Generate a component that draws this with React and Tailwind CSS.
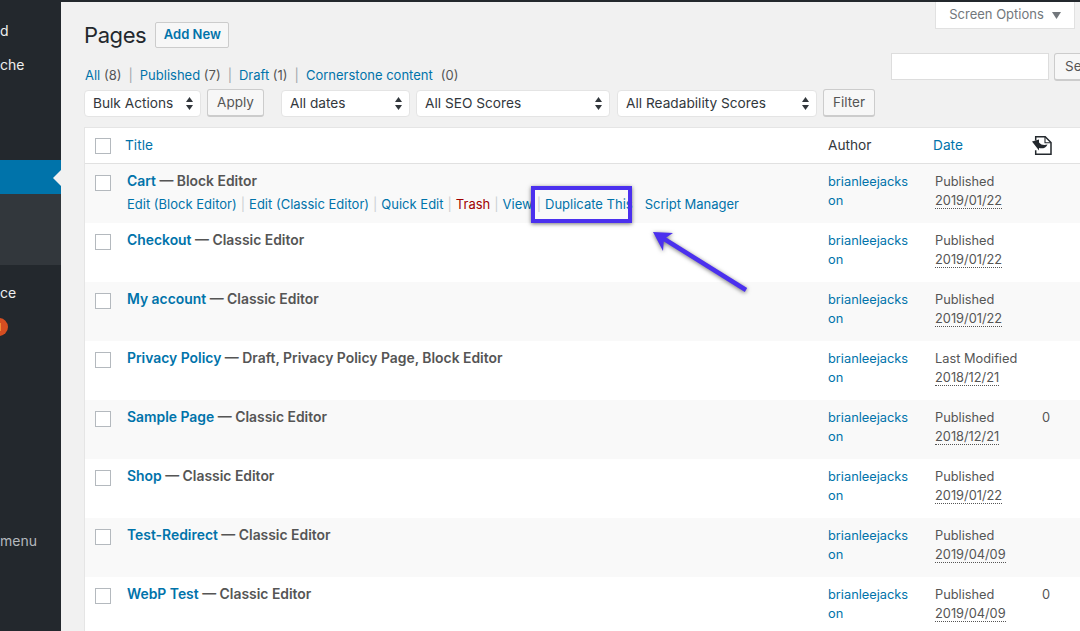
import React from "react";

const rows = [
  { title: "Cart", state: "Block Editor", status: "Published", date: "2019/01/22", actions: true },
  { title: "Checkout", state: "Classic Editor", status: "Published", date: "2019/01/22" },
  { title: "My account", state: "Classic Editor", status: "Published", date: "2019/01/22" },
  { title: "Privacy Policy", state: "Draft, Privacy Policy Page, Block Editor", status: "Last Modified", date: "2018/12/21" },
  { title: "Sample Page", state: "Classic Editor", status: "Published", date: "2018/12/21", comments: "0" },
  { title: "Shop", state: "Classic Editor", status: "Published", date: "2019/01/22" },
  { title: "Test-Redirect", state: "Classic Editor", status: "Published", date: "2019/04/09" },
  { title: "WebP Test", state: "Classic Editor", status: "Published", date: "2019/04/09", comments: "0" },
];

const selects = [
  { label: "Bulk Actions", width: "w-[117px]" },
  { label: "All dates", width: "w-[129px]" },
  { label: "All SEO Scores", width: "w-[194px]" },
  { label: "All Readability Scores", width: "w-[200px]" },
];

const Checkbox = () => (
  <span className="block w-4 h-4 bg-white border border-[#b4b9be]"></span>
);

const Select = ({ label, width }) => (
  <div className={`${width} h-[27px] bg-white rounded-[4px] border border-[#e4e4e4] flex items-center justify-between pl-2 pr-[7px] text-[13.7px] text-[#32373c]`}>
    <span>{label}</span>
    <svg width="7" height="13" viewBox="0 0 7 13" fill="#32373c">
      <path d="M3.5 0 7 5H0z" />
      <path d="M3.5 13 0 8h7z" />
    </svg>
  </div>
);

const Button = ({ children, className }) => (
  <button className={`h-[28px] bg-[#f7f7f7] border border-[#cccccc] border-b-2 rounded-[3px] text-[13.5px] text-[#555555] ${className}`}>
    {children}
  </button>
);

const Sep = () => <span className="text-[#a0a5aa] px-[7px]">|</span>;

const ActionSep = () => <span className="text-[#ccd0d4] px-[4px]">|</span>;

const App = () => {
  return (
    <div className="w-[1080px] h-[631px] overflow-hidden flex flex-col bg-[#f1f1f1] font-['Inter','Liberation_Sans',sans-serif]">
      <div className="h-[2px] bg-[#23282d] shrink-0"></div>

      <div className="flex-1 flex min-h-0">
        {/* SIDEBAR */}
        <div className="relative w-[61px] shrink-0 bg-[#23282d] text-[14px] text-[#eeeeee] flex flex-col">
          <div className="h-[158px] pt-[19px]">
            <div className="h-5 leading-5">d</div>
            <div className="h-5 leading-5 mt-[14px]">che</div>
          </div>
          <div className="h-[34px] bg-[#0073aa]"></div>
          <div className="h-[71px] bg-[#32373c]"></div>
          <div className="h-5 leading-5 mt-[18px]">ce</div>
          <div className="mt-[15px] -ml-[10px] w-[18px] h-[18px] rounded-full bg-[#d54e21] flex items-center justify-center text-[11px] text-white">1</div>
          <div className="h-5 leading-5 mt-[195px] text-[#b4b9be]">menu</div>
          <span className="absolute right-0 top-[168px] w-0 h-0 border-y-[8px] border-y-transparent border-r-[8px] border-r-[#f1f1f1]"></span>
        </div>

        {/* CONTENT */}
        <div className="relative flex-1 min-w-0 pl-[23px]">
          <div className="flex">
            <div className="w-[791px] shrink-0">
              <div className="flex items-center gap-[9px] pt-[20px]">
                <h1 className="text-[22px] tracking-[-0.4px] leading-[26px] text-[#23282d]">Pages</h1>
                <button className="h-[26px] w-[74px] bg-[#f7f7f7] border border-[#cccccc] rounded-[2px] text-[13px] font-semibold text-[#0073aa]">
                  Add New
                </button>
              </div>
              <div className="mt-[17px] h-5 leading-5 text-[13px] text-[#555555] whitespace-nowrap">
                <span className="text-[#0073aa] pl-px">All</span> (8)
                <Sep />
                <span className="text-[#0073aa]">Published</span> (7)
                <Sep />
                <span className="text-[#0073aa]">Draft</span> (1)
                <Sep />
                <span className="text-[#0073aa]">Cornerstone content</span>
                <span className="pl-[8px]">(0)</span>
              </div>
              <div className="flex items-center mt-[4px]">
                <Select {...selects[0]} />
                <Button className="w-[57px] ml-[6px]">Apply</Button>
                <div className="ml-[17px]"><Select {...selects[1]} /></div>
                <div className="ml-[6px]"><Select {...selects[2]} /></div>
                <div className="ml-[7px]"><Select {...selects[3]} /></div>
                <Button className="w-[52px] ml-[6px]">Filter</Button>
              </div>
            </div>

            <div className="ml-[16px] w-[230px] shrink-0">
              <div className="ml-[44px] w-[140px] h-[27px] bg-white border border-[#e1e1e1] border-t-0 flex items-center justify-center gap-[8px] text-[13px] text-[#72777c]">
                Screen Options
                <svg width="9" height="7" viewBox="0 0 9 7" fill="#72777c"><path d="M0 0h9L4.5 7z" /></svg>
              </div>
              <div className="flex mt-[24px] gap-[5px]">
                <div className="w-[158px] h-[27px] bg-white border border-[#dddddd]"></div>
                <Button className="w-[60px] shrink-0 text-left pl-[10px]">Search</Button>
              </div>
            </div>
          </div>

          {/* TABLE */}
          <div className="mt-[10px] w-[1030px] bg-white border-t border-l border-[#e5e5e5]">
            <div className="grid grid-cols-[40px_703px_105px_99px_1fr] items-center h-[36px] border-b border-[#e1e1e1] text-[13.7px]">
              <div className="pl-[10px]"><Checkbox /></div>
              <div className="text-[#0073aa]">Title</div>
              <div className="text-[#32373c]">Author</div>
              <div className="text-[#0073aa]">Date</div>
              <svg width="20" height="19" viewBox="0 0 20 19" fill="none">
                <path d="M3.7 4.5V.8h9.5l5.8 5.7v11.7H3.7v-4" stroke="#23282d" strokeWidth="1.5" />
                <path d="M13 1v5.7h5.8" stroke="#23282d" strokeWidth="1.1" />
                <path d="M0 5.5 7 3.5v3c2 2.5 5 3 8.5 2-1.5 3.5-5 4.5-8.5 3.5v2.5z" fill="#23282d" />
              </svg>
            </div>

            {rows.map((row, index) => (
              <div
                key={index}
                className={`grid grid-cols-[40px_703px_105px_99px_1fr] h-[59px] text-[12.8px] leading-[19px] ${index % 2 === 0 ? "bg-[#f9f9f9]" : "bg-white"}`}
              >
                <div className="pl-[10px] pt-[11px]"><Checkbox /></div>
                <div className="pl-[2px] pt-[8px]">
                  <div className="text-[13.9px] font-semibold text-[#555555] whitespace-nowrap">
                    <span className="text-[#0073aa]">{row.title}</span> — {row.state}
                  </div>
                  {row.actions && (
                    <div className="mt-[4px] text-[13px] whitespace-nowrap text-[#0073aa]">
                      Edit (Block Editor)<ActionSep />Edit (Classic Editor)<ActionSep />Quick Edit<ActionSep />
                      <span className="text-[#a00000]">Trash</span><ActionSep />View<ActionSep />Duplicate This<span className="pl-[12px]">Script Manager</span>
                    </div>
                  )}
                </div>
                <div className="pt-[8px] text-[#0073aa]">brianleejacks<br />on</div>
                <div className="pt-[8px] pl-[2px] text-[#555555]">
                  {row.status}
                  <br />
                  <abbr className="no-underline border-b border-dotted border-[#555555]">{row.date}</abbr>
                </div>
                <div className="pt-[8px] pl-[10px] text-[#555555]">{row.comments}</div>
              </div>
            ))}
          </div>

          {/* HIGHLIGHT */}
          <div className="absolute left-[470px] top-[184px] w-[101px] h-[37px] border-[4px] border-[#4b30ee] shadow-[0_1px_4px_rgba(0,0,0,0.55)]"></div>
          <svg className="absolute left-[590px] top-[226px]" width="100" height="70" viewBox="0 0 100 70" fill="none" style={{ filter: "drop-shadow(0 1px 2px rgba(0,0,0,0.55))" }}>
            <path d="M95 62 10 9" stroke="#4b30ee" strokeWidth="4.5" />
            <path d="M2 4 22 5 13 11 12 23z" fill="#4b30ee" />
          </svg>
        </div>
      </div>
    </div>
  );
};

export default App;
